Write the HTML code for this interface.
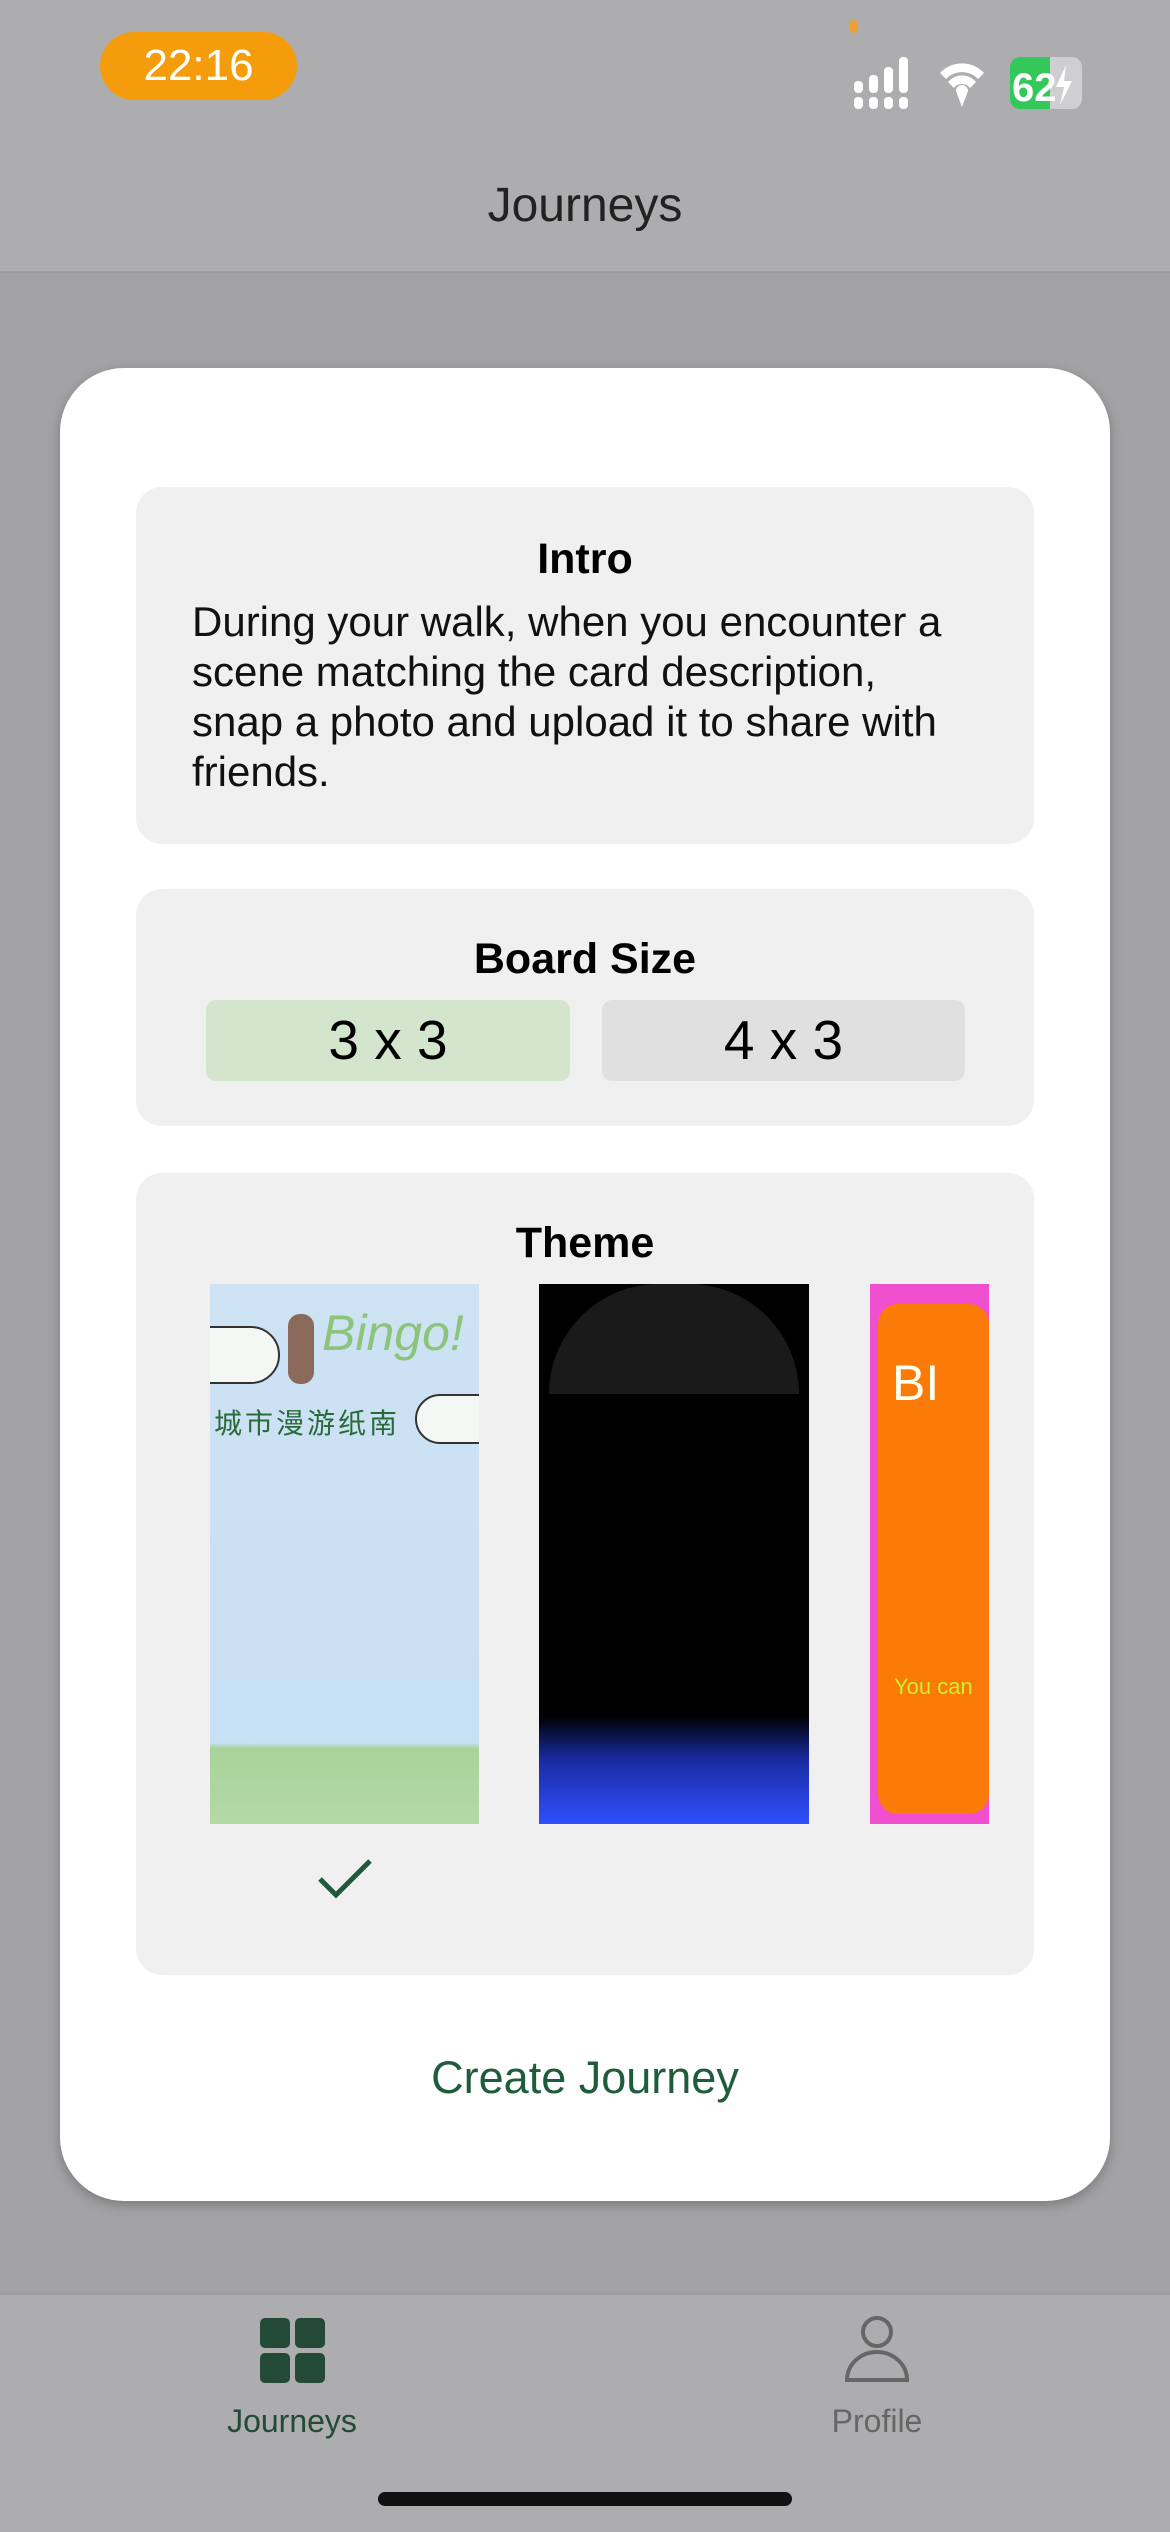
<!DOCTYPE html>
<html><head><meta charset="utf-8"><style>
*{margin:0;padding:0;box-sizing:border-box}
body{width:1170px;height:2532px;position:relative;overflow:hidden;background:#a3a3a5;font-family:"Liberation Sans","Noto Sans CJK SC",sans-serif}
.abs{position:absolute}
.hdr{left:0;top:0;width:1170px;height:273px;background:#adadaf;border-bottom:2px solid #9d9d9f}
.box{background:#f0f0f0;border-radius:26px;position:absolute;left:136px;width:898px}
.t{position:absolute;left:0;width:100%;text-align:center;font-weight:bold;font-size:43px;color:#000}
</style></head><body>
<div class="abs hdr"></div>
<div class="abs" style="left:100px;top:32px;width:197px;height:68px;background:#f59c0c;border-radius:34px;color:#fff;font-size:44px;text-align:center;line-height:68px">22:16</div>
<div class="abs" style="left:849px;top:20px;width:9px;height:13px;border-radius:50%;background:#f0a030"></div>
<svg class="abs" style="left:852px;top:55px" width="240" height="60" viewBox="0 0 240 60">
<g fill="#fff"><rect x="2" y="26" width="9" height="12" rx="4"/><rect x="2" y="42" width="9" height="12" rx="4"/>
<rect x="17" y="20" width="9" height="18" rx="4"/><rect x="17" y="42" width="9" height="12" rx="4"/>
<rect x="32" y="12" width="9" height="26" rx="4"/><rect x="32" y="42" width="9" height="12" rx="4"/>
<rect x="47" y="2" width="9" height="36" rx="4"/><rect x="47" y="42" width="9" height="12" rx="4"/>
<path d="M88 18 a30 30 0 0 1 44 0 l-6 6 a22 22 0 0 0 -32 0z M96 27 a18 18 0 0 1 28 0 l-6 6 a10 10 0 0 0 -16 0z M104 36 a6 6 0 0 1 12 0 l-6 16z"/></g>
<rect x="158" y="2" width="72" height="52" rx="10" fill="#cfcfd1"/>
<path d="M168 2 h30 v52 h-30 a10 10 0 0 1 -10 -10 v-32 a10 10 0 0 1 10 -10z" fill="#34c759"/>
<text x="160" y="46" font-size="40" font-weight="bold" fill="#fff" font-family="Liberation Sans">62</text>
<path d="M214 10 l-10 22 h8 l-4 18 l12 -24 h-8z" fill="#fff"/>
</svg>
<div class="abs" style="left:0;top:178px;width:1170px;text-align:center;font-size:48px;color:#222">Journeys</div>

<div class="abs" style="left:60px;top:368px;width:1050px;height:1833px;background:#fff;border-radius:64px;box-shadow:0 4px 12px rgba(0,0,0,.25)">
</div>
<div class="box" style="top:487px;height:357px">
 <div class="t" style="top:48px">Intro</div>
 <div class="abs" style="left:56px;top:110px;width:780px;font-size:42px;line-height:50px;color:#111">During your walk, when you encounter a scene matching the card description, snap a photo and upload it to share with friends.</div>
</div>
<div class="box" style="top:889px;height:237px">
 <div class="t" style="top:46px">Board Size</div>
 <div class="abs" style="left:70px;top:111px;width:364px;height:81px;background:#d3e5cc;border-radius:10px;text-align:center;line-height:81px;font-size:55px">3 x 3</div>
 <div class="abs" style="left:466px;top:111px;width:363px;height:81px;background:#e0e0e0;border-radius:10px;text-align:center;line-height:81px;font-size:55px">4 x 3</div>
</div>
<div class="box" style="top:1173px;height:802px;overflow:hidden">
 <div class="t" style="top:46px">Theme</div>
 <div class="abs" style="left:74px;top:111px;width:269px;height:540px;overflow:hidden;background:linear-gradient(#cde3f4,#c8e0f3 85%,#a8d39a 86%,#b4d9a6)">
  <div class="abs" style="left:-30px;top:42px;width:100px;height:58px;border:2px solid #333;border-radius:30px;background:#f4f8f4"></div>
  <div class="abs" style="left:205px;top:110px;width:90px;height:50px;border:2px solid #333;border-radius:30px;background:#f4f8f4"></div>
  <div class="abs" style="left:78px;top:30px;width:26px;height:70px;background:#8a6a5a;border-radius:12px"></div>
  <div class="abs" style="left:112px;top:20px;font-size:50px;color:#8cc47a;font-style:italic">Bingo!</div>
  <div class="abs" style="left:4px;top:118px;font-size:28px;color:#2a6a3a;letter-spacing:3px">城市漫游纸南</div>
 </div>
 <div class="abs" style="left:403px;top:111px;width:270px;height:540px;background:linear-gradient(#000 80%,#1a2aa0 88%,#3050ff)">
  <div class="abs" style="left:10px;top:0px;width:250px;height:110px;border-radius:125px 125px 0 0;background:#1a1a1a"></div>
 </div>
 <div class="abs" style="left:734px;top:111px;width:119px;height:540px;background:#f050d0">
  <div class="abs" style="left:8px;top:20px;width:111px;height:510px;background:#fb7a08;border-radius:20px"></div>
  <div class="abs" style="left:22px;top:70px;font-size:50px;color:#ffe;">BI</div>
  <div class="abs" style="left:24px;top:390px;font-size:22px;color:#c8f030">You can</div>
 </div>
 <svg class="abs" style="left:180px;top:680px" width="60" height="50" viewBox="0 0 60 50"><path d="M4 26 L20 42 L54 8" fill="none" stroke="#1e5a3a" stroke-width="5"/></svg>
</div>
<div class="abs" style="left:60px;top:2052px;width:1050px;text-align:center;font-size:45px;color:#1f5c3b">Create Journey</div>

<div class="abs" style="left:0;top:2293px;width:1170px;height:239px;background:#adadaf;border-top:2px solid #9d9d9f"></div>
<svg class="abs" style="left:258px;top:2316px" width="70" height="70" viewBox="0 0 70 70"><g fill="#224a36"><rect x="2" y="2" width="30" height="30" rx="5"/><rect x="37" y="2" width="30" height="30" rx="5"/><rect x="2" y="37" width="30" height="30" rx="5"/><rect x="37" y="37" width="30" height="30" rx="5"/></g></svg>
<div class="abs" style="left:192px;top:2403px;width:200px;text-align:center;font-size:32px;color:#224a36">Journeys</div>
<svg class="abs" style="left:844px;top:2316px" width="66" height="70" viewBox="0 0 66 70"><g fill="none" stroke="#666" stroke-width="4"><ellipse cx="33" cy="16" rx="14" ry="14"/><path d="M3 64 a30 28 0 0 1 60 0 z"/></g></svg>
<div class="abs" style="left:777px;top:2403px;width:200px;text-align:center;font-size:32px;color:#666">Profile</div>
<div class="abs" style="left:378px;top:2492px;width:414px;height:14px;border-radius:7px;background:#111"></div>
</body></html>
